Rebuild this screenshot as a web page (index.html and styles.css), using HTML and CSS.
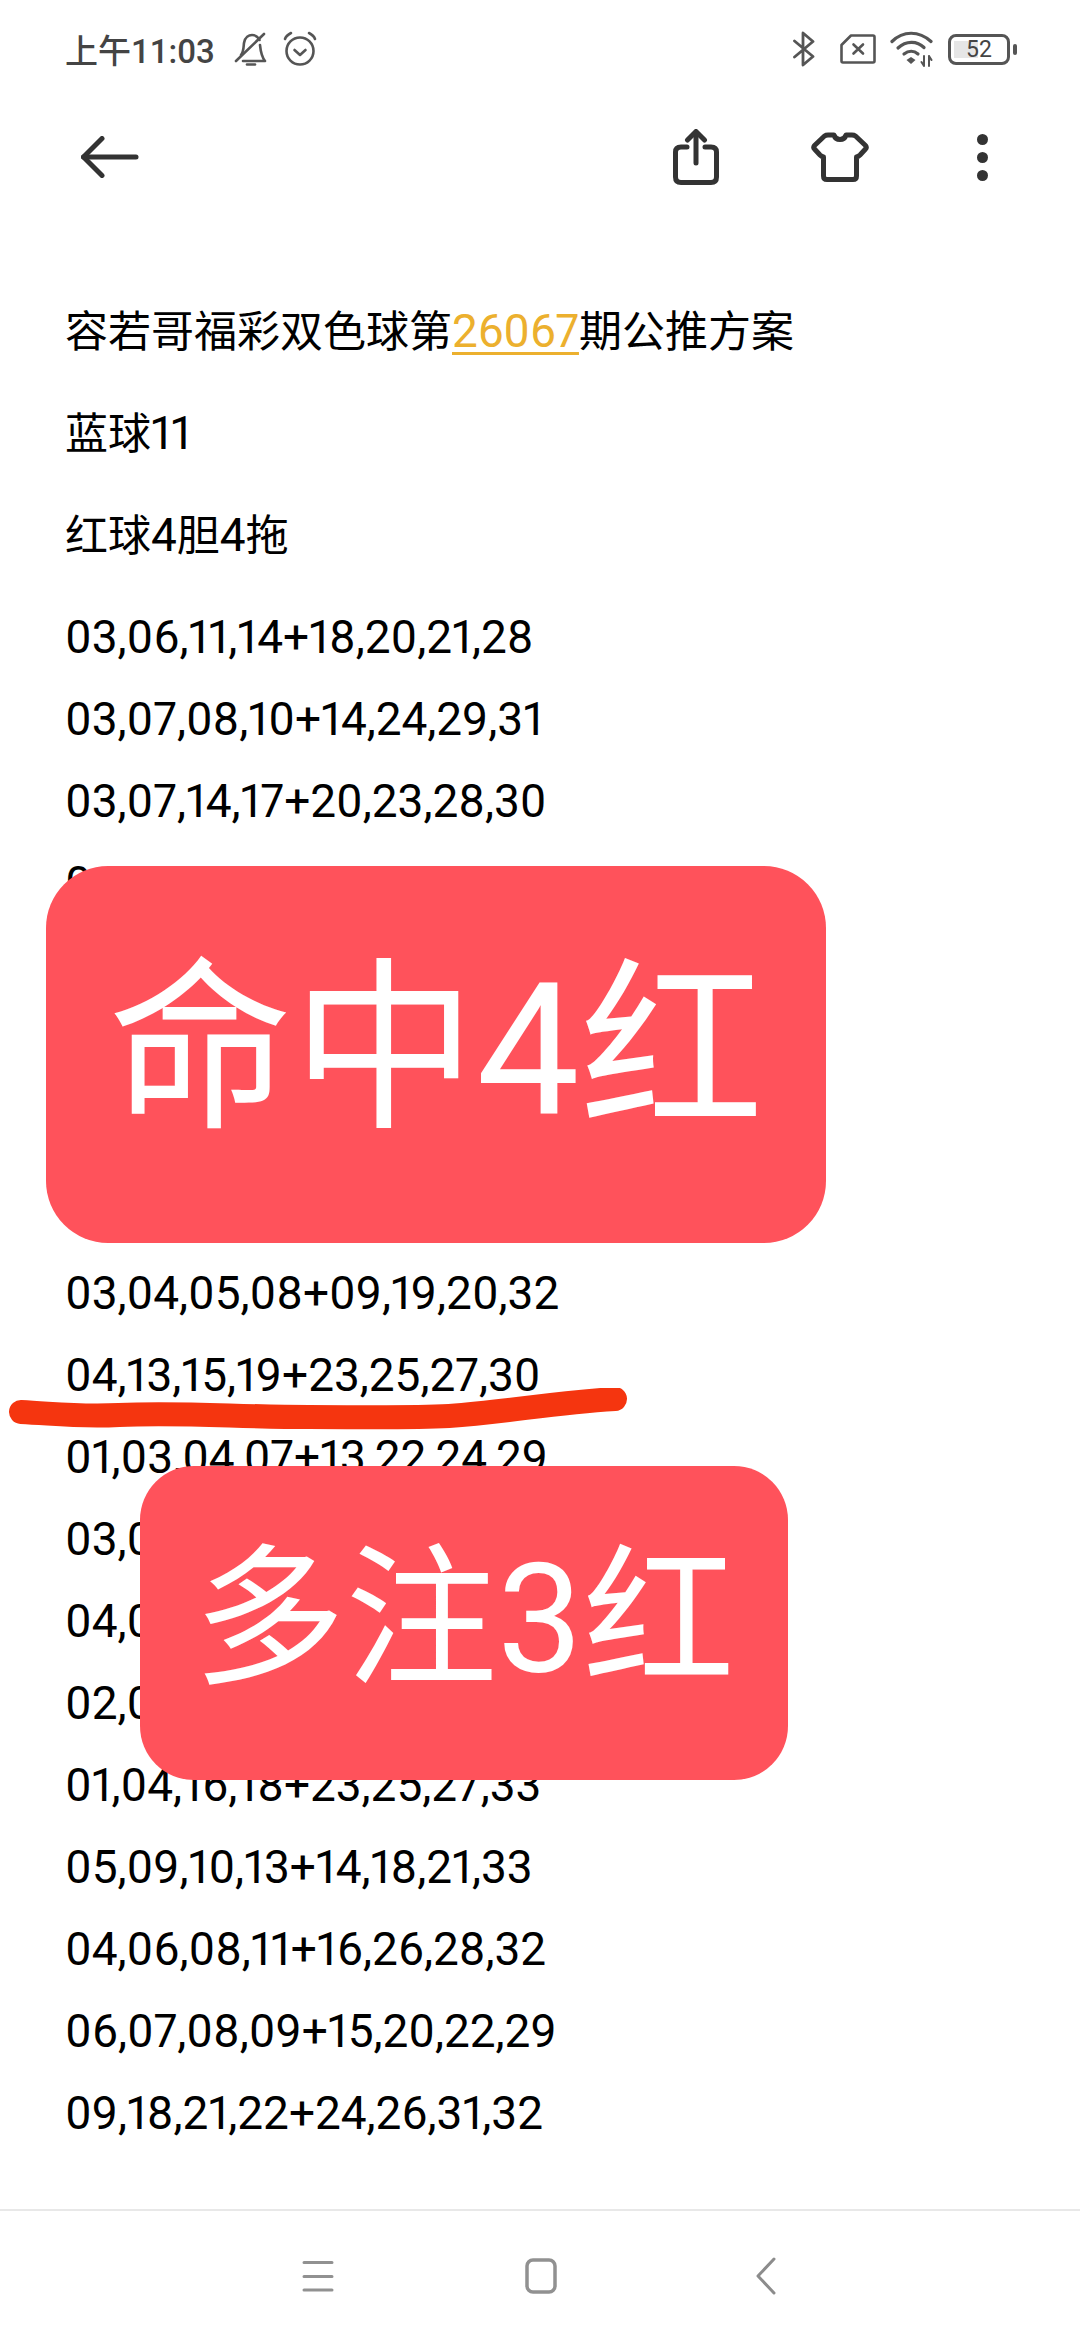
FILE: index.html
```html
<!DOCTYPE html>
<html lang="zh">
<head>
	<meta charset="UTF-8">
	<title>双色球</title>
	<link rel="stylesheet" href="styles.css">
</head>
<body>
	<div class="status_bar">
		<span class="clock">上午11:03</span>
		<svg class="ic_bell" width="34" height="34" viewBox="0 0 34 34" fill="none" stroke="#555" stroke-width="2.6" stroke-linecap="round" stroke-linejoin="round">
			<path d="M7 23 C10 19 9.500 14 10 11 C11 5 15 3 18 3 C22 3 24 5 25.500 8"/>
			<path d="M26 13 C26.500 18 27 24 31 29 H9"/>
			<path d="M30 2 L2 29"/>
			<path d="M13 32.500 H21"/>
		</svg>
		<svg class="ic_alarm" width="34" height="36" viewBox="0 0 34 36" fill="none" stroke="#555" stroke-width="2.6" stroke-linecap="round" stroke-linejoin="round">
			<circle cx="17" cy="20" r="13.500"/>
			<path d="M11.500 19 L17 24 L22.500 19"/>
			<path d="M2 8 C3 5 5 3.500 8 2"/>
			<path d="M32 8 C31 5 29 3.500 26 2"/>
		</svg>
		<span class="status_space"></span>
		<svg class="ic_bt" width="22" height="36" viewBox="0 0 22 36" fill="none" stroke="#555" stroke-width="2.800" stroke-linecap="round" stroke-linejoin="round">
			<path d="M1.500 10 L20 25.500 L10 34 V2 L20 10.500 L1.500 26"/>
		</svg>
		<svg class="ic_sim" width="36" height="30" viewBox="0 0 36 30" fill="none" stroke="#555" stroke-width="2.600" stroke-linecap="round" stroke-linejoin="round">
			<path d="M11 1.500 H33 Q34.500 1.500 34.500 3 V27 Q34.500 28.500 33 28.500 H3 Q1.500 28.500 1.500 27 V11 Z"/>
			<path d="M13.500 10.500 L23 19.500 M23 10.500 L13.500 19.500"/>
		</svg>
		<svg class="ic_wifi" width="44" height="36" viewBox="0 0 44 36" fill="none" stroke="#555" stroke-linecap="round">
			<path stroke-width="3.200" d="M2 10.500 C13 -0.500 29 -0.500 41 10.500"/>
			<path stroke-width="3.200" d="M8 17 C16 9.500 27 9.500 34 16.500"/>
			<path stroke-width="3.200" d="M14 23 C18.500 19.500 24 19.500 28 23"/>
			<path fill="#555" stroke="none" d="M16.500 29 L21 26 L25.500 29 L21 33 Z"/>
			<path stroke-width="2" d="M34 25 V35 M31.500 31 L34 35 M39 35 V25 M39 25 L41.500 29"/>
		</svg>
		<div class="battery">
			<div class="battery_fill"></div>
			<span class="battery_num">52</span>
		</div>
		<div class="battery_nub"></div>
	</div>

	<div class="tool_bar">
		<svg class="ic_back" width="58" height="42" viewBox="0 0 58 42" fill="none" stroke="#333" stroke-width="5" stroke-linecap="round" stroke-linejoin="round">
			<path d="M21 2.500 L2.500 21 L21 39.500"/>
			<path d="M2.500 21 H55"/>
		</svg>
		<span class="tool_space"></span>
		<svg class="ic_share" width="46" height="56" viewBox="0 0 46 56" fill="none" stroke="#333" stroke-width="5" stroke-linecap="round" stroke-linejoin="round">
			<path d="M14 18 H8 Q2.500 18 2.500 23 V48 Q2.500 53.500 8 53.500 H38 Q43.500 53.500 43.500 48 V23 Q43.500 18 38 18 H32"/>
			<path d="M23 34 V3.500"/>
			<path d="M14.500 11 L23 2.500 L31.500 11"/>
		</svg>
		<svg class="ic_shirt" width="58" height="50" viewBox="0 0 58 50" fill="none" stroke="#333" stroke-width="5" stroke-linecap="round" stroke-linejoin="round">
			<path d="M23 3 C24 6.500 26.500 7.500 29 7.500 C31.500 7.500 34 6.500 35 3 H41 Q43 3 44.500 4 L54.500 13.500 Q56 15.500 54.500 17 L49 23 Q47.500 24.500 45.500 25 V44 Q45.500 47.500 42 47.500 H16 Q12.500 47.500 12.500 44 V25 Q10.500 24.500 9 23 L3.500 17 Q2 15.500 3.500 13.500 L13.500 4 Q15 3 17 3 Z"/>
		</svg>
		<div class="ic_dots">
			<span class="dot"></span>
			<span class="dot"></span>
			<span class="dot"></span>
		</div>
	</div>

	<div class="content">
		<p class="head">容若哥福彩双色球第<span class="link digits">26067</span>期公推方案</p>
		<p class="head">蓝球<span class="digits">11</span></p>
		<p class="head">红球<span class="digits">4</span>胆<span class="digits">4</span>拖</p>

		<div class="numbers">
			<p class="num">03,06,11,14+18,20,21,28</p>
			<p class="num">03,07,08,10+14,24,29,31</p>
			<p class="num">03,07,14,17+20,23,28,30</p>
			<p class="num">0</p>
			<div class="num_gap"></div>
			<p class="num">03,04,05,08+09,19,20,32</p>
			<p class="num">04,13,15,19+23,25,27,30</p>
			<p class="num">01,03,04,07+13,22,24,29</p>
			<p class="num">03,0</p>
			<p class="num">04,0</p>
			<p class="num">02,0</p>
			<p class="num">01,04,16,18+23,25,27,33</p>
			<p class="num">05,09,10,13+14,18,21,33</p>
			<p class="num">04,06,08,11+16,26,28,32</p>
			<p class="num">06,07,08,09+15,20,22,29</p>
			<p class="num">09,18,21,22+24,26,31,32</p>
		</div>
	</div>

	<div class="nav_bar">
		<svg width="32" height="32" viewBox="0 0 32 32" fill="none" stroke="#919191" stroke-width="3" stroke-linecap="round">
			<path d="M2 2.500 H30 M2 16.500 H30 M2 30 H30"/>
		</svg>
		<svg class="ic_home" width="32" height="36" viewBox="0 0 32 36" fill="none" stroke="#919191" stroke-width="3.500">
			<rect x="2" y="2" width="28" height="32" rx="6"/>
		</svg>
		<svg width="20" height="38" viewBox="0 0 20 38" fill="none" stroke="#8c8c8c" stroke-width="3" stroke-linecap="round" stroke-linejoin="round">
			<path d="M18 2 L2 19 L18 36"/>
		</svg>
	</div>

	<!-- stickers pasted on top of the note -->
	<div class="sticker sticker_big">命中4红</div>
	<svg class="scribble" width="640" height="50" viewBox="0 0 640 50" fill="none" stroke="#f5350f" stroke-width="24" stroke-linecap="round" stroke-linejoin="round">
		<path d="M12 24 C50 26 70 29 110 27 C170 24 230 29 300 29 C350 29 400 30 440 28 C500 24 540 15 606 11"/>
	</svg>
	<div class="sticker sticker_small">多注3红</div>
</body>
</html>
```

FILE: styles.css
```css
* {
	box-sizing: border-box;
}

body {
	margin: 0;
	width: 1080px;
	height: 2340px;
	position: relative;
	overflow: hidden;
	background: #fff;
	color: #000;
	font-family: Roboto, "Noto Sans CJK SC", sans-serif;
	display: flex;
	flex-direction: column;
}

p {
	margin: 0;
}

svg {
	display: block;
	flex: none;
}

/* status bar */
.status_bar {
	height: 98px;
	padding: 0 63px 0 65px;
	display: flex;
	align-items: center;
}

.clock {
	font-size: 33px;
	font-weight: 500;
	color: #444;
	width: 169px;
}

.status_space {
	flex: 1;
}

.ic_alarm {
	margin-left: 15px;
}

.ic_bt {
	margin-right: 1px;
}

.ic_sim {
	margin-left: 24px;
}

.ic_wifi {
	margin-left: 14px;
}

.battery {
	margin-left: 14px;
	width: 62px;
	height: 31px;
	border: 3.500px solid #555;
	border-radius: 8px;
	position: relative;
	display: flex;
	align-items: center;
	justify-content: center;
}

.battery_fill {
	position: absolute;
	left: 3px;
	top: 4px;
	bottom: 4px;
	width: 24px;
	background: #e6e6e6;
}

.battery_num {
	position: relative;
	font-size: 23px;
	color: #444;
}

.battery_nub {
	margin-left: 3px;
	width: 4px;
	height: 11px;
	border-radius: 2px;
	background: #555;
}

/* tool bar */
.tool_bar {
	height: 118px;
	padding: 0 92px 0 81px;
	display: flex;
	align-items: center;
}

.tool_space {
	flex: 1;
}

.ic_shirt {
	margin-left: 92px;
}

.ic_dots {
	margin-left: 108px;
	display: flex;
	flex-direction: column;
	gap: 7px;
}

.dot {
	width: 11px;
	height: 11px;
	border-radius: 50%;
	background: #333;
}

/* note text */
.content {
	flex: 1;
	padding: 64px 0 0 65px;
}

.head {
	font-size: 43px;
	line-height: 102px;
	height: 102px;
}

.digits {
	font-size: 46px;
	font-variant-numeric: proportional-nums;
}

.link {
	color: #ecb02e;
	letter-spacing: -0.4px;
	text-decoration: underline;
	text-decoration-thickness: 3px;
	text-underline-offset: 5px;
}

.numbers {
	margin-top: 10px;
}

.num {
	font-size: 46px;
	font-variant-numeric: proportional-nums;
	letter-spacing: -0.05px;
	line-height: 82px;
	height: 82px;
}

.num_gap {
	height: 328px;
}

/* nav bar */
.nav_bar {
	height: 131px;
	border-top: 2px solid #e8e8e8;
	padding: 0 304px 0 302px;
	display: flex;
	align-items: center;
	justify-content: space-between;
}

.ic_home {
	margin-right: 8px;
}

/* stickers */
.sticker {
	position: absolute;
	display: flex;
	align-items: center;
	justify-content: center;
	background: #ff525b;
	color: #fff;
}

.sticker_big {
	left: 46px;
	top: 866px;
	width: 780px;
	height: 377px;
	border-radius: 62px;
	font-size: 184px;
	padding-bottom: 44px;
}

.sticker_small {
	left: 140px;
	top: 1466px;
	width: 648px;
	height: 314px;
	border-radius: 54px;
	font-size: 152px;
	padding-bottom: 34px;
}

.scribble {
	position: absolute;
	left: 9px;
	top: 1388px;
}
```
